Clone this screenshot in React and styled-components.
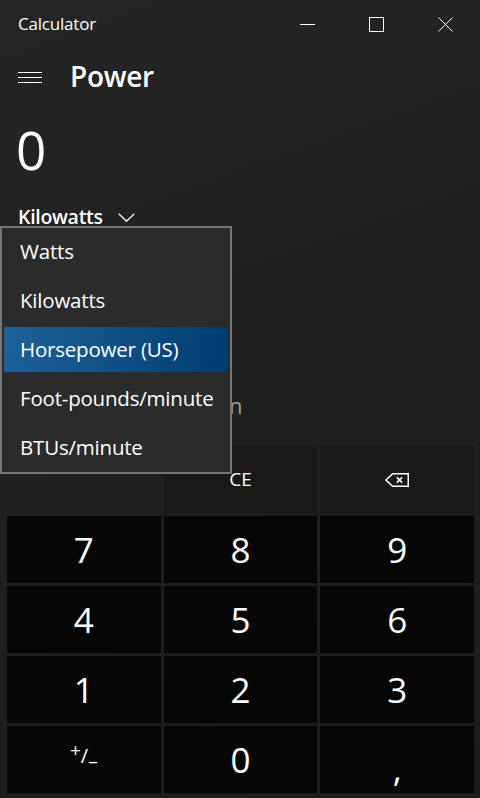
import React from "react";
import styled, { createGlobalStyle } from "styled-components";

const Global = createGlobalStyle`
  html, body { margin: 0; padding: 0; background: #1f1f1f; }
  body { font-family: "Open Sans", "Noto Sans", sans-serif; }
  * { box-sizing: border-box; }
`;

const Window = styled.div`
  position: relative;
  width: 480px;
  height: 798px;
  overflow: hidden;
  display: flex;
  flex-direction: column;
  color: #fff;
  background: linear-gradient(160deg, #252525 0%, #202020 45%, #1c1c1c 100%);
`;

const TitleBar = styled.div`
  height: 48px;
  display: flex;
  align-items: center;
`;

const AppName = styled.div`
  flex: 1;
  padding-left: 18px;
  font-size: 17px;
  letter-spacing: -0.2px;
  color: #fff;
  padding-bottom: 1px;
`;

const WinButton = styled.div`
  width: 69px;
  height: 48px;
  display: flex;
  align-items: center;
  justify-content: center;
`;

const Header = styled.div`
  height: 58px;
  display: flex;
  align-items: center;
  padding-left: 18px;
`;

const Hamburger = styled.div`
  width: 24px;
  height: 11px;
  display: flex;
  flex-direction: column;
  justify-content: space-between;
  margin-right: 28px;
  span { display: block; height: 1px; background: #fff; }
`;

const Title = styled.div`
  font-size: 28px;
  font-weight: 600;
  letter-spacing: -0.3px;
  margin-top: -2px;
`;

const Value = styled.div`
  padding-left: 16px;
  font-size: 53px;
  font-weight: 500;
  line-height: 70px;
  margin-top: 9px;
`;

const UnitButton = styled.div`
  display: flex;
  align-items: center;
  gap: 15px;
  padding-left: 18px;
  margin-top: 16px;
  font-size: 19.5px;
  font-weight: 600;
  letter-spacing: -0.3px;
  height: 30px;
  svg { margin-top: 2px; }
`;

const Hint = styled.div`
  padding-left: 18px;
  margin-top: 159px;
  font-size: 22px;
  line-height: 30px;
  letter-spacing: -1px;
  color: #a0a0a0;
  white-space: nowrap;
`;

const Keypad = styled.div`
  margin-top: auto;
  display: grid;
  grid-template-columns: repeat(3, 1fr);
  grid-auto-rows: 67px;
  gap: 3px;
  padding: 0 6px 5px 7px;
`;

const Key = styled.div`
  display: flex;
  align-items: center;
  justify-content: center;
  background: ${(p) => (p.$variant === "op" ? "#181818" : p.$variant === "empty" ? "transparent" : "#060606")};
  font-size: ${(p) => (p.$variant === "op" ? "19px" : "35px")};
  font-weight: ${(p) => (p.$variant === "op" ? 400 : 500)};
  color: #fff;
  line-height: 1;
`;

const Sign = styled.span`
  display: inline-flex;
  align-items: center;
  margin-top: -8px;
  font-weight: 400;
  font-size: 20px;
  sup, sub { font-size: 19px; line-height: 1; }
  sup { transform: translateY(-5px); }
  sub { transform: translateY(6px); }
`;

const Comma = styled.span`
  transform: translateY(9px);
`;

const Menu = styled.div`
  position: absolute;
  left: 0;
  top: 226px;
  width: 232px;
  height: 248px;
  background: #2b2b2b;
  border: 2px solid #767676;
  padding: 1px 2px 0;
  display: flex;
  flex-direction: column;
  gap: 4px;
`;

const MenuItem = styled.div`
  height: 45px;
  display: flex;
  align-items: center;
  padding-left: 16px;
  padding-bottom: 2px;
  font-size: 20.5px;
  letter-spacing: -0.2px;
  color: #fff;
  white-space: nowrap;
  background: ${(p) => (p.$selected ? "linear-gradient(100deg, #1e6198 0%, #0f4f86 50%, #003c70 100%)" : "transparent")};
`;

const units = ["Watts", "Kilowatts", "Horsepower (US)", "Foot-pounds/minute", "BTUs/minute"];

export default function App() {
  return (
    <>
      <Global />
      <Window>
        <TitleBar>
          <AppName>Calculator</AppName>
          <WinButton>
            <svg width="15" height="15" viewBox="0 0 15 15"><path d="M0 7.5H15" stroke="#fff" strokeWidth="1" /></svg>
          </WinButton>
          <WinButton>
            <svg width="15" height="15" viewBox="0 0 15 15"><rect x="0.5" y="0.5" width="14" height="14" fill="none" stroke="#fff" strokeWidth="1" /></svg>
          </WinButton>
          <WinButton>
            <svg width="15" height="15" viewBox="0 0 15 15"><path d="M0.5 0.5L14.5 14.5M14.5 0.5L0.5 14.5" stroke="#fff" strokeWidth="1" /></svg>
          </WinButton>
        </TitleBar>
        <Header>
          <Hamburger><span /><span /><span /></Hamburger>
          <Title>Power</Title>
        </Header>
        <Value>0</Value>
        <UnitButton>
          Kilowatts
          <svg width="17" height="9" viewBox="0 0 17 9"><path d="M0.7 0.7L8.5 8.3L16.3 0.7" fill="none" stroke="#fff" strokeWidth="1.2" /></svg>
        </UnitButton>
        <Hint>Horsepower conversion</Hint>
        <Keypad>
          <Key $variant="empty" />
          <Key $variant="op">CE</Key>
          <Key $variant="op">
            <svg width="24" height="14" viewBox="0 0 24 14">
              <path d="M0.9 7L7.6 0.75H23.25V13.25H7.6Z" fill="none" stroke="#fff" strokeWidth="1.5" strokeLinejoin="miter" />
              <path d="M11.8 4.2L17.2 9.6M17.2 4.2L11.8 9.6" stroke="#fff" strokeWidth="1.6" />
            </svg>
          </Key>
          {["7", "8", "9", "4", "5", "6", "1", "2", "3"].map((d) => (
            <Key key={d}>{d}</Key>
          ))}
          <Key><Sign><sup>+</sup>/<sub>–</sub></Sign></Key>
          <Key>0</Key>
          <Key><Comma>,</Comma></Key>
        </Keypad>
        <Menu>
          {units.map((u) => (
            <MenuItem key={u} $selected={u === "Horsepower (US)"}>{u}</MenuItem>
          ))}
        </Menu>
      </Window>
    </>
  );
}
